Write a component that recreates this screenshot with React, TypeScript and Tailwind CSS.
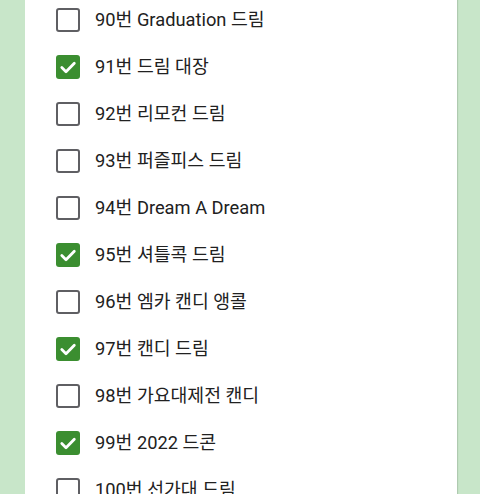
import React from "react";

const items: [string, boolean][] = [
  ["90번 Graduation 드림", false],
  ["91번 드림 대장", true],
  ["92번 리모컨 드림", false],
  ["93번 퍼즐피스 드림", false],
  ["94번 Dream A Dream", false],
  ["95번 셔틀콕 드림", true],
  ["96번 엠카 캔디 앵콜", false],
  ["97번 캔디 드림", true],
  ["98번 가요대제전 캔디", false],
  ["99번 2022 드콘", true],
  ["100번 선가대 드림", false],
];

export default function App() {
  return (
    <div className="w-[480px] h-[494px] overflow-hidden bg-[#c8e6c9] flex" style={{ fontFamily: "Roboto, 'Noto Sans CJK KR', sans-serif" }}>
      <div className="ml-[25px] w-[432px] h-full bg-white shadow-[1px_0_1px_rgba(0,0,0,0.12)] pl-[31px]">
        <div className="mt-[-3.5px] flex flex-col">
          {items.map(([label, checked], i) => (
            <div key={i} className="h-[47px] flex items-center gap-[15px]">
              {checked ? (
                <div className="w-[24px] h-[24px] rounded-[3px] bg-[#3b8e30] flex items-center justify-center">
                  <svg width="24" height="24" viewBox="0 0 24 24" fill="none">
                    <path d="M5.8 12.6l4.2 4.2 8.3-8.6" stroke="white" strokeWidth="2.8" strokeLinecap="round" strokeLinejoin="round" />
                  </svg>
                </div>
              ) : (
                <div className="w-[24px] h-[24px] rounded-[3px] border-2 border-[#5f5f63] bg-white" />
              )}
              <span className="text-[18.3px] text-[#212121] leading-none">{label}</span>
            </div>
          ))}
        </div>
      </div>
    </div>
  );
}
